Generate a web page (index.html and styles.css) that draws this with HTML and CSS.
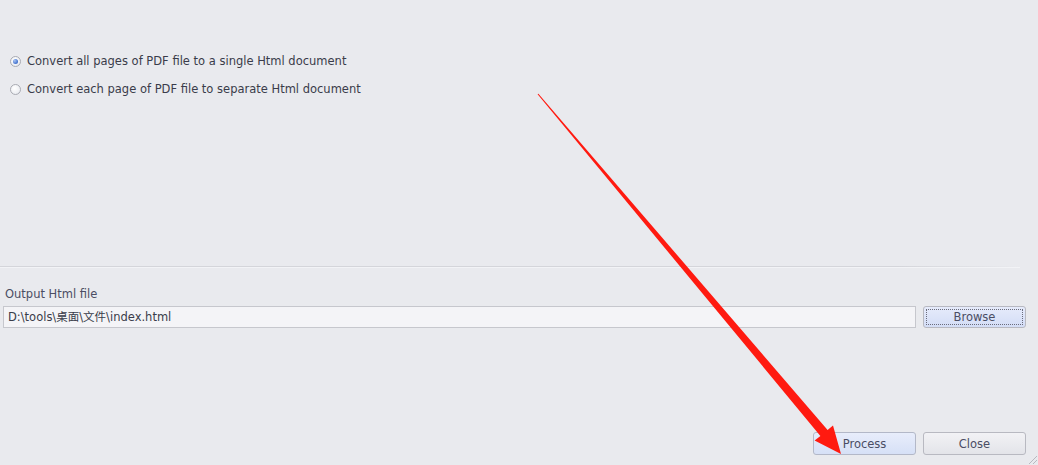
FILE: index.html
```html
<!DOCTYPE html>
<html>
<head>
<meta charset="utf-8">
<link rel="stylesheet" href="styles.css">
</head>
<body>
<div class="dialog">
  <div class="options">
    <label class="opt"><span class="radio checked"></span><span class="opt-text">Convert all pages of PDF file to a single Html document</span></label>
    <label class="opt"><span class="radio"></span><span class="opt-text">Convert each page of PDF file to separate Html document</span></label>
  </div>
  <div class="sep"></div>
  <div class="output">
    <div class="out-label">Output Html file</div>
    <div class="out-row">
      <div class="field">D:\tools\桌面\文件\index.html</div>
      <div class="btn focus"><span class="focus-ring">Browse</span></div>
    </div>
  </div>
  <div class="footer">
    <div class="btn primary">Process</div>
    <div class="btn">Close</div>
  </div>
  <svg class="grip" width="14" height="14" viewBox="0 0 14 14">
    <path d="M13 5 L5 13 M13 9 L9 13" stroke="#b8b9c0" stroke-width="1"/>
  </svg>
  <svg class="arrow" width="1038" height="465" viewBox="0 0 1038 465">
    <polygon fill="#ff1a10" points="538.4,93.7 827.6,430.0 833,425.5 841,454 814.6,440.6 820.4,436.0 537.6,94.3"/>
  </svg>
</div>
</body>
</html>
```
FILE: styles.css
```css
html, body {
  margin: 0;
  padding: 0;
  background: #e9eaee;
}
.dialog {
  position: relative;
  width: 1038px;
  height: 465px;
  overflow: hidden;
  font-family: "DejaVu Sans", "Noto Sans CJK SC", sans-serif;
  font-size: 11.5px;
  color: #3a3c4a;
  display: flex;
  flex-direction: column;
}
.options {
  margin-top: 50px;
  display: flex;
  flex-direction: column;
  gap: 6px;
}
.opt {
  height: 22px;
  display: flex;
  align-items: center;
  padding-left: 10px;
}
.radio {
  width: 11px;
  height: 11px;
  box-sizing: border-box;
  border-radius: 50%;
  border: 1px solid #a9abb3;
  background: radial-gradient(circle at 40% 35%, #ffffff 0%, #eceef2 70%, #d9dbe0 100%);
  margin-right: 6px;
  position: relative;
  flex: none;
}
.radio.checked::after {
  content: "";
  position: absolute;
  left: 2px;
  top: 2px;
  width: 5px;
  height: 5px;
  border-radius: 50%;
  background: radial-gradient(circle at 35% 35%, #a9c4f2 0%, #4d7bd3 60%, #2e57b0 100%);
}
.sep {
  margin-top: 166px;
  height: 1px;
  width: 1020px;
  background: linear-gradient(to right, #d4d5da 0%, #d4d5da 88%, rgba(212,213,218,0) 100%);
  border-bottom: 1px solid #f2f3f6;
}
.output {
  margin-top: 17px;
  padding-left: 3px;
  padding-right: 12px;
}
.out-label {
  height: 18px;
  line-height: 18px;
  padding-left: 2px;
  color: #4b4d63;
}
.out-row {
  margin-top: 3px;
  display: flex;
  gap: 7px;
  height: 22px;
}
.field {
  flex: 1;
  box-sizing: border-box;
  border: 1px solid #c6c7cd;
  background: #f4f4f7;
  line-height: 20px;
  padding-left: 4px;
  color: #3a3c4a;
  white-space: nowrap;
}
.btn {
  width: 103px;
  box-sizing: border-box;
  border: 1px solid #b8b9c1;
  border-radius: 3px;
  background: linear-gradient(#f2f2f5, #e3e4e9);
  display: flex;
  align-items: center;
  justify-content: center;
  color: #4a4d64;
}
.btn.focus {
  background: linear-gradient(#e6ebfb, #d3ddf6);
  padding: 2px;
}
.focus-ring {
  flex: 1;
  align-self: stretch;
  display: flex;
  align-items: center;
  justify-content: center;
  border: 1px dotted #6a6c7c;
}
.btn.primary {
  background: linear-gradient(#e8edfb, #d6e0f6);
  border-color: #b3b8c8;
}
.footer {
  margin-top: 104px;
  display: flex;
  justify-content: flex-end;
  gap: 7px;
  padding-right: 12px;
  height: 23px;
}
.grip {
  position: absolute;
  right: 0;
  bottom: 0;
}
.arrow {
  position: absolute;
  left: 0;
  top: 0;
  pointer-events: none;
}
```
